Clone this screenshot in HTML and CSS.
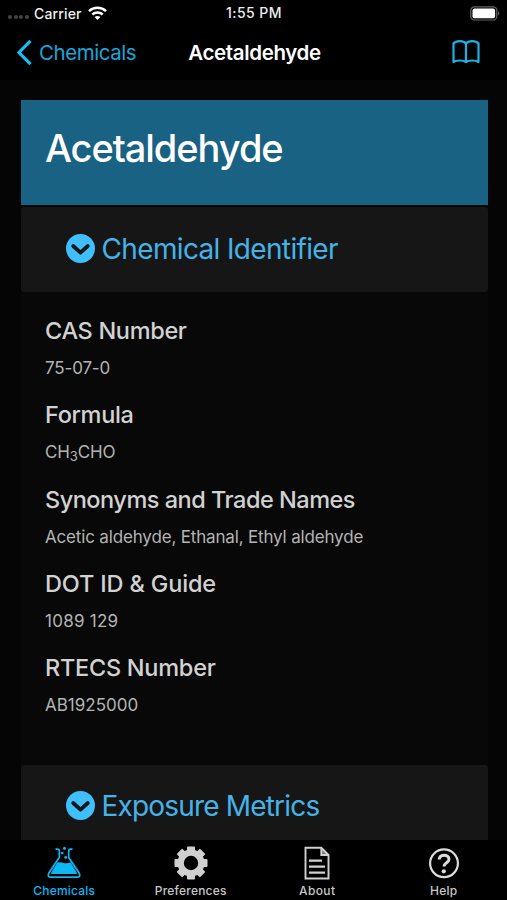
FILE: index.html
```html
<!DOCTYPE html>
<html lang="en">
<head>
<meta charset="utf-8">
<title>Acetaldehyde</title>
<link rel="stylesheet" href="styles.css">
</head>
<body>
<div class="app">
  <header class="status">
    <div class="status-left">
      <span class="dots"><i></i><i></i><i></i><i></i></span>
      <span class="carrier">Carrier</span>
      <svg class="wifi" width="19" height="14" viewBox="0 0 19 14" fill="none" stroke="#fff" stroke-width="2.500">
        <path d="M1 5.100C5.700.6 13.300.6 18 5.100"/>
        <path d="M4.300 8.500c2.900-2.700 7.500-2.700 10.400 0"/>
        <path d="M9.500 14 6.600 11.100c1.600-1.500 4.200-1.500 5.800 0z" fill="#fff" stroke="none"/>
      </svg>
    </div>
    <span class="clock">1:55 PM</span>
    <svg class="battery" width="30" height="15" viewBox="0 0 30 15">
      <rect x=".8" y=".8" width="26" height="13.200" rx="3.600" fill="none" stroke="#666" stroke-width="1.200"/>
      <rect x="2.500" y="2.500" width="22.600" height="9.800" rx="2" fill="#fff"/>
      <path d="M28 5.200c1.600.7 1.600 3.700 0 4.400z" fill="#666"/>
    </svg>
  </header>
  <nav class="nav">
    <a class="back">
      <svg width="16" height="27" viewBox="0 0 16 27" fill="none" stroke="#1bbcf2" stroke-width="3.200"><path d="M14.500 1.800 3 13.500l11.500 11.700"/></svg>
      <span class="back-label">Chemicals</span>
    </a>
    <span class="nav-title">Acetaldehyde</span>
    <svg class="book" width="28" height="24" viewBox="0 0 28 24" fill="none" stroke="#1bb2e6" stroke-width="2.200" stroke-linejoin="round">
      <path d="M14 3.500C11.500.3 4.200.3 1.500 3.500V22c3-2 9.500-2 12.500 0 3-2 9.500-2 12.500 0V3.500C23.800.3 16.500.3 14 3.500zV22"/>
    </svg>
  </nav>
  <main class="content">
    <div class="hero"><h1>Acetaldehyde</h1></div>
    <h2 class="section">
      <svg width="29" height="29" viewBox="0 0 29 29"><circle cx="14.500" cy="14.500" r="14.500" fill="#40bfff"/><path d="m7.200 12 7.300 6.700 7.300-6.700" fill="none" stroke="#161616" stroke-width="3.800" stroke-linecap="round" stroke-linejoin="round"/></svg>
      <span class="s1">Chemical Identifier</span>
    </h2>
    <div class="details">
      <h3 class="t1">CAS Number</h3><p class="p1">75-07-0</p>
      <h3 class="t2">Formula</h3><p class="p2">CH<sub>3</sub>CHO</p>
      <h3 class="t3">Synonyms and Trade Names</h3><p class="p3">Acetic aldehyde, Ethanal, Ethyl aldehyde</p>
      <h3 class="t4">DOT ID &amp; Guide</h3><p class="p4">1089 129</p>
      <h3 class="t5">RTECS Number</h3><p class="p5">AB1925000</p>
    </div>
    <h2 class="section">
      <svg width="29" height="29" viewBox="0 0 29 29"><circle cx="14.500" cy="14.500" r="14.500" fill="#40bfff"/><path d="m7.200 12 7.300 6.700 7.300-6.700" fill="none" stroke="#161616" stroke-width="3.800" stroke-linecap="round" stroke-linejoin="round"/></svg>
      <span class="s2">Exposure Metrics</span>
    </h2>
  </main>
  <footer class="tabs">
    <a class="tab active">
      <svg width="34" height="34" viewBox="0 0 34 34" fill="none" stroke="#0bb8f5" stroke-width="1.700" stroke-linejoin="round">
        <path d="M8.500 3.200h1.800q2 0 2 2v6.300L2 26.800q-2.200 4.400 2 4.400h26q4.200 0 2-4.400L21.700 11.500V5.200q0-2 2-2h1.800"/>
        <path d="M10.200 16.500q3.500-.8 6.300.4 3.200.6 7.300-.4l6 10.300q.6 1.200-.8 1.200H5q-1.400 0-.8-1.200z" fill="#0bb8f5" stroke="none"/>
        <g fill="#0bb8f5" stroke="none"><circle cx="17.500" cy="2.300" r="1.500"/><circle cx="15.300" cy="7" r="1.300"/><circle cx="18.700" cy="11.500" r="1.400"/></g>
      </svg>
      <span class="l1">Chemicals</span>
    </a>
    <a class="tab">
      <svg width="34" height="34" viewBox="-17 -17 34 34">
        <g fill="#d0d0d0"><g id="cogs"><rect x="-4" y="-16.500" width="8" height="33" rx="1"/><rect x="-16.500" y="-4" width="33" height="8" rx="1"/></g><use href="#cogs" transform="rotate(45)"/><circle r="13.500"/></g>
        <circle r="7.200" fill="#000"/>
      </svg>
      <span class="l2">Preferences</span>
    </a>
    <a class="tab">
      <svg width="34" height="34" viewBox="0 0 34 34" fill="none" stroke="#d0d0d0" stroke-width="1.900">
        <path d="M21.300 1.500 28.500 8.700h-7.200z" fill="#777" stroke="none"/>
        <path d="M5.500 1.800h15.800l7.200 7.200v23.500h-23zM21.300 1.800V9h7.200"/>
        <path d="M9 14.700h13M9 20.700h16M9 26.700h16" stroke-width="2.200"/>
      </svg>
      <span class="l3">About</span>
    </a>
    <a class="tab">
      <svg width="34" height="34" viewBox="0 0 34 34" fill="none" stroke="#dcdcdc">
        <circle cx="17" cy="17.300" r="13.900" stroke-width="2.200"/>
        <path d="M12.200 13.600c0-6 9.800-5.600 9.800-.3 0 3.500-5 3.500-5 7.200" stroke-width="3"/>
        <circle cx="16.800" cy="25.300" r="2.100" fill="#dcdcdc" stroke="none"/>
      </svg>
      <span class="l4">Help</span>
    </a>
  </footer>
</div>
</body>
</html>
```
FILE: styles.css
```css
* { box-sizing: border-box; margin: 0; padding: 0; }
body { background: #000; font-family: Inter, "Liberation Sans", sans-serif; color: #d2d2d2; }
svg { display: block; flex: none; }
span, h1, h3, p { white-space: nowrap; }
.app { width: 507px; height: 900px; display: flex; flex-direction: column; overflow: hidden; background: #000; }
.status { height: 26px; display: grid; grid-template-columns: 1fr auto 1fr; align-items: center; padding: 0 7px 0 8px; color: #eee; font-size: 14px; font-weight: 500; }
.status-left { display: flex; align-items: center; }
.dots { display: flex; gap: 1.500px; width: 26px; padding-top: 8px; }
.dots i { width: 4px; height: 4px; border-radius: 50%; background: #444; }
.carrier { letter-spacing: .15px; }
.clock { letter-spacing: .45px; padding-bottom: 1px; }
.wifi { margin-left: 6px; }
.battery { justify-self: end; }
.nav { height: 54px; display: grid; grid-template-columns: 1fr auto 1fr; align-items: center; padding: 0 16px 2px; font-size: 20.500px; }
.back { display: flex; align-items: center; gap: 7px; color: #1aa5d8; }
.back-label { letter-spacing: -.45px; }
.nav-title { color: #fff; font-weight: 600; letter-spacing: -.35px; padding-left: 2px; }
.book { justify-self: end; margin-right: 11px; }
.content { flex: 1; min-height: 0; overflow: hidden; background: #050505; padding: 20px 19.500px 0 20.500px; }
.hero { height: 105px; background: #196284; padding: 24.500px 24.500px; margin-bottom: 2px; }
h1 { font-size: 38px; line-height: 46px; font-weight: 500; color: #fff; letter-spacing: -1.050px; }
.section { height: 85px; display: flex; align-items: center; gap: 6.500px; padding: 0 0 3px 45.500px; border-radius: 3px; background: #161616; color: #45b3e9; font-size: 28px; font-weight: 400; }
.s1 { letter-spacing: -.650px; padding-top: 2px; }
.s2 { letter-spacing: -.820px; padding-top: 1px; }
.details { height: 472.500px; background: #080808; padding: 24px 24.500px 0; }
h3 { font-size: 23.500px; line-height: 30px; font-weight: 500; }
p { font-size: 17px; line-height: 24px; margin: 10px 0 20.300px; color: #b4b4b4; }
.t1, .t2 { letter-spacing: -.33px; }
.t3 { letter-spacing: -.49px; }
.t4 { letter-spacing: -.15px; }
.t5 { letter-spacing: -.26px; }
.p1, .p2 { letter-spacing: -.15px; }
.p3 { letter-spacing: -.165px; }
.p4 { letter-spacing: .25px; }
sub { font-size: 13px; line-height: 0; vertical-align: -3px; }
.tabs { height: 60px; display: grid; grid-template-columns: repeat(4, 1fr); padding: 6px 0 0 1px; background: #000; color: #c8c8c8; font-size: 12px; font-weight: 500; }
.tab { display: flex; flex-direction: column; align-items: center; gap: 3px; line-height: 15px; }
.active { color: #0bb8f5; }
.l1, .l2 { letter-spacing: .2px; }
.l3 { letter-spacing: .4px; }
.l4 { letter-spacing: .3px; }
```
